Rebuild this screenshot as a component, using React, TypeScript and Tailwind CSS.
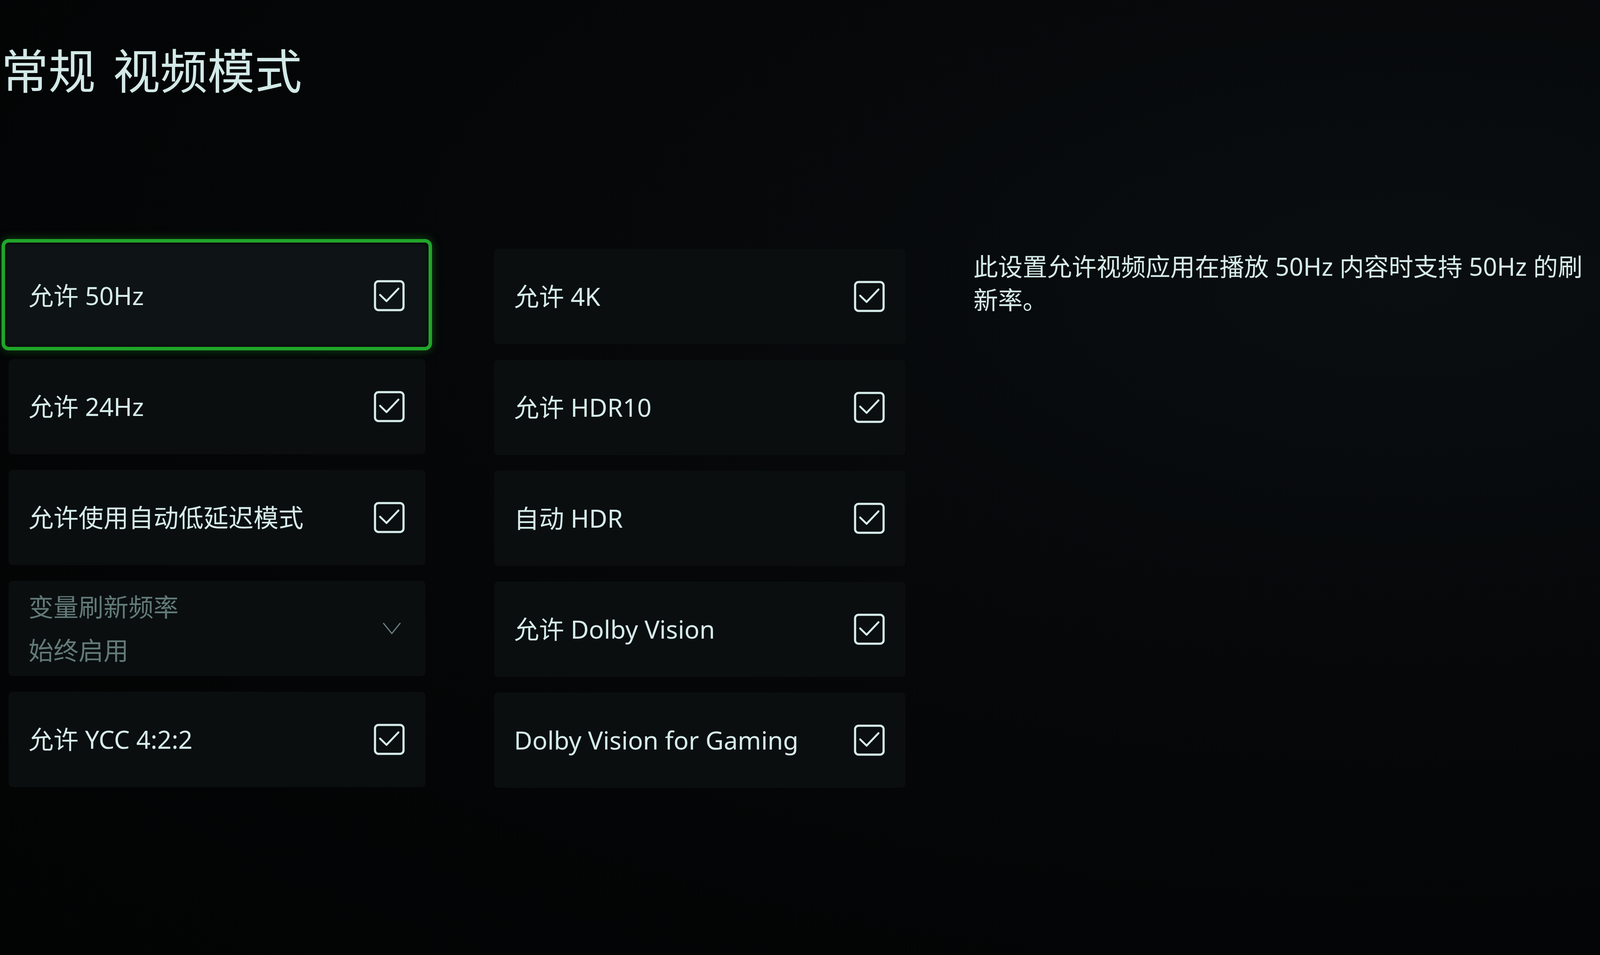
import React from "react";

type Item = { label: string; kind: "check" | "select"; value?: string; focused?: boolean };

const left: Item[] = [
  { label: "允许 50Hz", kind: "check", focused: true },
  { label: "允许 24Hz", kind: "check" },
  { label: "允许使用自动低延迟模式", kind: "check" },
  { label: "变量刷新频率", kind: "select", value: "始终启用" },
  { label: "允许 YCC 4:2:2", kind: "check" },
];

const right: Item[] = [
  { label: "允许 4K", kind: "check" },
  { label: "允许 HDR10", kind: "check" },
  { label: "自动 HDR", kind: "check" },
  { label: "允许 Dolby Vision", kind: "check" },
  { label: "Dolby Vision for Gaming", kind: "check" },
];

function CheckBox() {
  return (
    <svg width="79" height="80" viewBox="0 0 79 80" className="shrink-0">
      <rect x="3" y="3" width="73" height="74" rx="9" fill="none" stroke="#d6ecea" strokeWidth="5.5" />
      <path d="M16 38 L32.5 54 L63 22" fill="none" stroke="#d6ecea" strokeWidth="5" strokeLinecap="round" strokeLinejoin="round" />
    </svg>
  );
}

function Chevron() {
  return (
    <svg width="46" height="32" viewBox="0 0 46 32" className="shrink-0 mr-[10px]">
      <path d="M2 3 L23 29 L44 3" fill="none" stroke="#6c8280" strokeWidth="3" strokeLinecap="round" strokeLinejoin="round" />
    </svg>
  );
}

function Card({ item }: { item: Item }) {
  return (
    <div className="relative h-[244px]">
      {item.focused ? (
        <div className="absolute -left-[18px] -right-[17px] -top-[23px] -bottom-[18px] rounded-[18px] border-[9px] border-[#20a52a] bg-[#0e1315] shadow-[0_0_24px_rgba(40,190,50,0.35),inset_0_0_10px_rgba(0,0,0,0.9)]" />
      ) : (
        <div className="absolute inset-0 rounded-[10px] bg-[#0a0e0f]" />
      )}
      <div className="relative h-full flex items-center justify-between pl-[51px] pr-[53px]">
        {item.kind === "check" ? (
          <>
            <span className="text-[64px] leading-none whitespace-nowrap">{item.label}</span>
            <CheckBox />
          </>
        ) : (
          <>
            <div className="flex flex-col gap-[30px] text-[64px] leading-[81px] text-[#627a78]">
              <span>{item.label}</span>
              <span>{item.value}</span>
            </div>
            <Chevron />
          </>
        )}
      </div>
    </div>
  );
}

export default function App() {
  return (
    <div className="w-full h-[2445px] overflow-hidden bg-[#030405] bg-[radial-gradient(ellipse_at_88%_30%,#0a0e10_0%,#050708_45%,#020303_100%)] text-[#d6ecea] font-['Noto_Sans','Noto_Sans_CJK_SC',sans-serif]">
      <header className="flex gap-[44px] pl-[3px] pt-[120px] text-[121px] leading-none text-[#d2e9e7]">
        <span>常规</span>
        <span>视频模式</span>
      </header>
      <main className="flex items-start pl-[22px] mt-[394px]">
        <div className="w-[1067px] shrink-0 flex flex-col gap-[40px]">
          {left.map((it) => (
            <Card key={it.label} item={it} />
          ))}
        </div>
        <div className="w-[1053px] shrink-0 ml-[176px] flex flex-col gap-[40px] mt-[2px]">
          {right.map((it) => (
            <Card key={it.label} item={it} />
          ))}
        </div>
        <p className="w-[1590px] shrink-0 ml-[174px] mt-[4px] text-[63px] leading-[85px]">
          此设置允许视频应用在播放 50Hz 内容时支持 50Hz 的刷新率。
        </p>
      </main>
    </div>
  );
}
